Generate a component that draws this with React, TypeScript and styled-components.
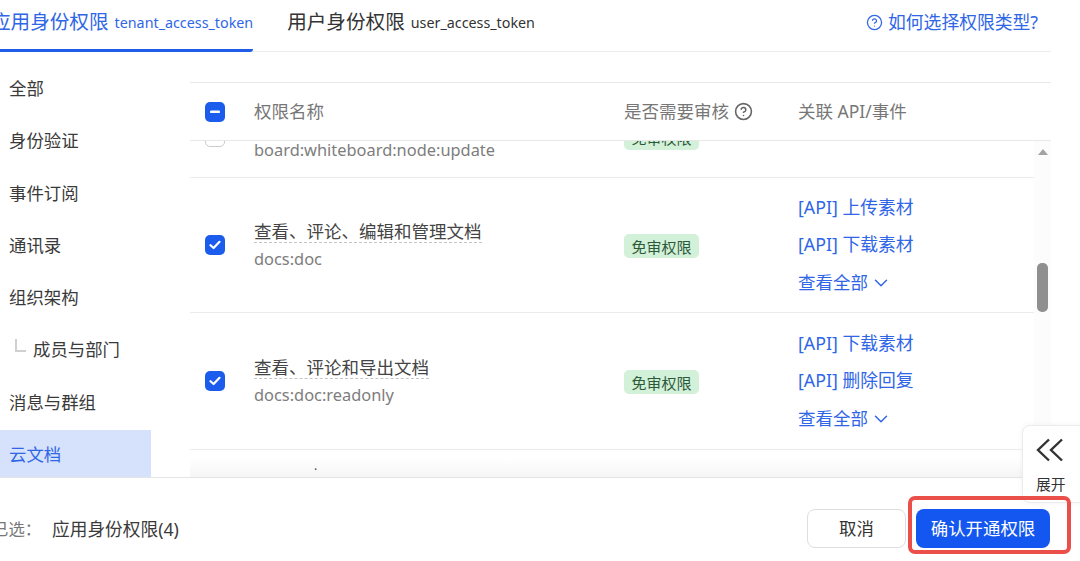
import React from "react";
import styled, { createGlobalStyle } from "styled-components";
import { ChevronDown, CircleHelp } from "lucide-react";

const Global = createGlobalStyle`
  html, body { margin: 0; padding: 0; background: #fff; }
  body { font-family: "Noto Sans", "Noto Sans CJK SC", sans-serif; }
`;

const Page = styled.div`
  position: relative;
  width: 1080px;
  height: 561px;
  overflow: hidden;
  background: #fff;
  display: flex;
  flex-direction: column;
  color: #333;
`;

const TabBar = styled.div`
  flex: none;
  height: 52px;
  width: 1051px;
  box-sizing: border-box;
  border-bottom: 1px solid #ececec;
  display: flex;
  align-items: flex-start;
`;

const Tab = styled.div<{ $active?: boolean }>`
  height: 52px;
  box-sizing: border-box;
  display: flex;
  align-items: center;
  gap: 6px;
  white-space: nowrap;
  color: ${(p) => (p.$active ? "#2f66e6" : "#333")};
  margin-left: ${(p) => (p.$active ? "-9px" : "34px")};
  border-bottom: 3px solid ${(p) => (p.$active ? "#1f5ce8" : "transparent")};
  border-bottom-right-radius: 3px;
  padding-bottom: 5px;
`;

const TabTitle = styled.span`
  font-size: 19.6px;
  margin-top: -3px;
`;

const TabToken = styled.span`
  font-size: 14.3px;
`;

const HelpLink = styled.div`
  margin-left: auto;
  margin-right: 13px;
  height: 45px;
  display: flex;
  align-items: center;
  gap: 5px;
  color: #2f66e6;
  font-size: 17.8px;
  white-space: nowrap;
`;

const HelpText = styled.span`
  margin-top: -3px;
`;

const Main = styled.div`
  flex: none;
  height: 425px;
  display: flex;
  border-bottom: 1px solid #e4e4e4;
  width: 1080px;
  overflow: hidden;
`;

const Sidebar = styled.nav`
  flex: none;
  width: 151px;
  margin-right: 39px;
  padding-top: 12px;
  box-sizing: border-box;
  display: flex;
  flex-direction: column;
  gap: 5.25px;
`;

const NavItem = styled.div<{ $active?: boolean; $child?: boolean }>`
  flex: none;
  height: 47px;
  display: flex;
  align-items: center;
  padding-left: ${(p) => (p.$child ? "15px" : "9px")};
  font-size: 17.4px;
  color: ${(p) => (p.$active ? "#2f66e6" : "#3a3a3a")};
  background: ${(p) => (p.$active ? "#d6e2fb" : "transparent")};
`;

const TreeMark = styled.span`
  width: 11px;
  height: 13px;
  margin-right: 7px;
  margin-top: -6px;
  border-left: 2px solid #d0d0d0;
  border-bottom: 2px solid #d0d0d0;
  box-sizing: border-box;
`;

const TableArea = styled.div`
  position: relative;
  flex: none;
  width: 861px;
  padding-top: 30px;
  box-sizing: border-box;
  display: flex;
  flex-direction: column;
`;

const Columns = styled.div`
  display: grid;
  grid-template-columns: 49px 370px 174px 1fr;
  align-items: center;
  padding-left: 15px;
`;

const HeaderRow = styled(Columns)`
  flex: none;
  height: 59px;
  box-sizing: border-box;
  border-top: 1px solid #e8e8e8;
  border-bottom: 1px solid #e8e8e8;
  color: #777;
  font-size: 17.5px;
`;

const HeaderCell = styled.div`
  display: flex;
  align-items: center;
  gap: 5px;
  white-space: nowrap;
  margin-top: -2px;
`;

const HeaderHelp = styled(CircleHelp)`
  color: #666;
  margin-top: 2px;
`;

const ScrollArea = styled.div`
  position: relative;
  flex: 1;
  overflow: hidden;
`;

const ScrollContent = styled.div`
  margin-top: -45px;
  margin-right: 17px;
`;

const Row = styled(Columns)<{ $h: number }>`
  height: ${(p) => p.$h}px;
  box-sizing: border-box;
  border-bottom: 1px solid #ececec;
`;

const Box = styled.div<{ $empty?: boolean }>`
  width: 20px;
  height: 20px;
  box-sizing: border-box;
  border-radius: 5px;
  background: ${(p) => (p.$empty ? "#fff" : "#1c5cec")};
  border: ${(p) => (p.$empty ? "1px solid #ccc" : "none")};
  display: flex;
  align-items: center;
  justify-content: center;
`;

const NameCell = styled.div`
  display: flex;
  flex-direction: column;
  align-items: flex-start;
  gap: 4px;
`;

const Title = styled.span`
  font-size: 17.5px;
  line-height: 21px;
  color: #444;
  border-bottom: 1px dashed #c4c4c4;
  white-space: nowrap;
`;

const Scope = styled.span`
  font-size: 16.4px;
  line-height: 23px;
  color: #7d7d7d;
  white-space: nowrap;
`;

const TagCell = styled.div`
  display: flex;
  align-items: center;
  padding-top: 2px;
`;

const Tag = styled.span`
  display: inline-flex;
  align-items: center;
  justify-content: center;
  width: 75px;
  height: 24px;
  border-radius: 5px;
  background: #d3f0d9;
  color: #2b5a38;
  font-size: 15px;
`;

const ApiList = styled.div`
  display: flex;
  flex-direction: column;
  gap: 12px;
  color: #2f66e6;
  font-size: 17.8px;
  line-height: 25.5px;
  white-space: nowrap;
`;

const More = styled.div`
  display: flex;
  align-items: center;
  gap: 2px;
  font-size: 17.5px;
`;

const Track = styled.div`
  position: absolute;
  right: 0;
  top: 0;
  bottom: 0;
  width: 17px;
  background: #fcfcfc;
`;

const TrackArrow = styled.div`
  position: absolute;
  left: 4px;
  top: 8px;
  width: 0;
  height: 0;
  border-left: 5px solid transparent;
  border-right: 5px solid transparent;
  border-bottom: 6px solid #a3a3a3;
`;

const Thumb = styled.div`
  position: absolute;
  left: 3px;
  top: 122px;
  width: 11px;
  height: 49px;
  border-radius: 5px;
  background: #8f8f8f;
`;

const Fade = styled.div`
  position: relative;
  height: 28px;
  background: linear-gradient(#fff 30%, #f5f5f5);
  color: #444;
  font-size: 12px;
  line-height: 14px;
  padding-left: 124px;
  padding-top: 9px;
  box-sizing: border-box;
`;

const Footer = styled.div`
  flex: 1;
  display: flex;
  align-items: center;
  padding: 18px 30px 0 0;
`;

const SelectedLabel = styled.span`
  margin-left: -8px;
  margin-top: -2px;
  width: 60px;
  color: #777;
  font-size: 16.4px;
  white-space: nowrap;
`;

const SelectedValue = styled.span`
  font-size: 17.7px;
  margin-top: -2px;
  color: #3a3a3a;
  white-space: nowrap;
`;

const Actions = styled.div`
  margin-left: auto;
  display: flex;
  gap: 10px;
`;

const Button = styled.button<{ $primary?: boolean }>`
  height: 39px;
  width: ${(p) => (p.$primary ? "134px" : "99px")};
  box-sizing: border-box;
  border-radius: 8px;
  border: ${(p) => (p.$primary ? "none" : "1px solid #dedede")};
  background: ${(p) => (p.$primary ? "#1456f0" : "#fff")};
  color: ${(p) => (p.$primary ? "#fff" : "#333")};
  font-family: inherit;
  font-size: 17.4px;
  padding: 0 0 2px;
`;

const Annotation = styled.div`
  position: absolute;
  left: 908px;
  top: 496px;
  width: 163px;
  height: 58px;
  box-sizing: border-box;
  border: 4px solid #ea4f4a;
  border-radius: 7px;
  pointer-events: none;
`;

const ExpandPanel = styled.div`
  position: absolute;
  left: 1022px;
  top: 425px;
  width: 70px;
  height: 78px;
  box-sizing: border-box;
  background: #fff;
  border: 1px solid #ececec;
  border-radius: 8px 0 0 8px;
  box-shadow: 0 0 6px rgba(0, 0, 0, 0.05);
  display: flex;
  flex-direction: column;
  padding-left: 13px;
  color: #333;
`;

const ExpandIcon = styled.div`
  height: 48px;
  padding-top: 12px;
  box-sizing: border-box;
`;

const ExpandText = styled.span`
  font-size: 14.8px;
  line-height: 20px;
`;

const Check = () => (
  <svg width="12" height="10" viewBox="0 0 12 10" fill="none">
    <path d="M1.5 5.2 4.6 8 10.5 1.8" stroke="#fff" strokeWidth="2.2" strokeLinecap="round" strokeLinejoin="round" />
  </svg>
);

const Dash = () => (
  <svg width="12" height="4" viewBox="0 0 12 4">
    <rect x="1" y="0.5" width="10" height="2.6" rx="1.2" fill="#fff" />
  </svg>
);

const DoubleLeft = () => (
  <svg width="28" height="24" viewBox="0 0 28 24" fill="none">
    <path d="M13 1.5 2 12l11 10.5M26 1.5 15 12l11 10.5" stroke="#333" strokeWidth="2.4" strokeLinejoin="miter" />
  </svg>
);

const nav = ["全部", "身份验证", "事件订阅", "通讯录", "组织架构"];

const rows = [
  { title: "查看、评论、编辑和管理文档", scope: "docs:doc", apis: ["[API] 上传素材", "[API] 下载素材"], h: 135 },
  { title: "查看、评论和导出文档", scope: "docs:doc:readonly", apis: ["[API] 下载素材", "[API] 删除回复"], h: 137 },
];

export default function App() {
  return (
    <Page>
      <Global />
      <TabBar>
        <Tab $active>
          <TabTitle>应用身份权限</TabTitle>
          <TabToken>tenant_access_token</TabToken>
        </Tab>
        <Tab>
          <TabTitle>用户身份权限</TabTitle>
          <TabToken>user_access_token</TabToken>
        </Tab>
        <HelpLink>
          <CircleHelp size={17} strokeWidth={1.8} />
          <HelpText>如何选择权限类型?</HelpText>
        </HelpLink>
      </TabBar>
      <Main>
        <Sidebar>
          {nav.map((n) => (
            <NavItem key={n}>{n}</NavItem>
          ))}
          <NavItem $child>
            <TreeMark />
            成员与部门
          </NavItem>
          <NavItem>消息与群组</NavItem>
          <NavItem $active>云文档</NavItem>
        </Sidebar>
        <TableArea>
          <HeaderRow>
            <Box>
              <Dash />
            </Box>
            <HeaderCell>权限名称</HeaderCell>
            <HeaderCell>
              是否需要审核
              <HeaderHelp size={19} strokeWidth={2} />
            </HeaderCell>
            <HeaderCell>关联 API/事件</HeaderCell>
          </HeaderRow>
          <ScrollArea>
            <ScrollContent>
              <Row $h={82}>
                <Box $empty />
                <NameCell>
                  <Title>查看、编辑和管理画板</Title>
                  <Scope>board:whiteboard:node:update</Scope>
                </NameCell>
                <TagCell>
                  <Tag>免审权限</Tag>
                </TagCell>
                <div />
              </Row>
              {rows.map((r) => (
                <Row key={r.scope} $h={r.h}>
                  <Box>
                    <Check />
                  </Box>
                  <NameCell>
                    <Title>{r.title}</Title>
                    <Scope>{r.scope}</Scope>
                  </NameCell>
                  <TagCell>
                    <Tag>免审权限</Tag>
                  </TagCell>
                  <ApiList>
                    {r.apis.map((a) => (
                      <span key={a}>{a}</span>
                    ))}
                    <More>
                      查看全部
                      <ChevronDown size={22} strokeWidth={1.6} />
                    </More>
                  </ApiList>
                </Row>
              ))}
            </ScrollContent>
            <Fade>.</Fade>
            <Track>
              <TrackArrow />
              <Thumb />
            </Track>
          </ScrollArea>
        </TableArea>
      </Main>
      <Footer>
        <SelectedLabel>已选：</SelectedLabel>
        <SelectedValue>应用身份权限(4)</SelectedValue>
        <Actions>
          <Button>取消</Button>
          <Button $primary>确认开通权限</Button>
        </Actions>
      </Footer>
      <ExpandPanel>
        <ExpandIcon>
          <DoubleLeft />
        </ExpandIcon>
        <ExpandText>展开</ExpandText>
      </ExpandPanel>
      <Annotation />
    </Page>
  );
}
